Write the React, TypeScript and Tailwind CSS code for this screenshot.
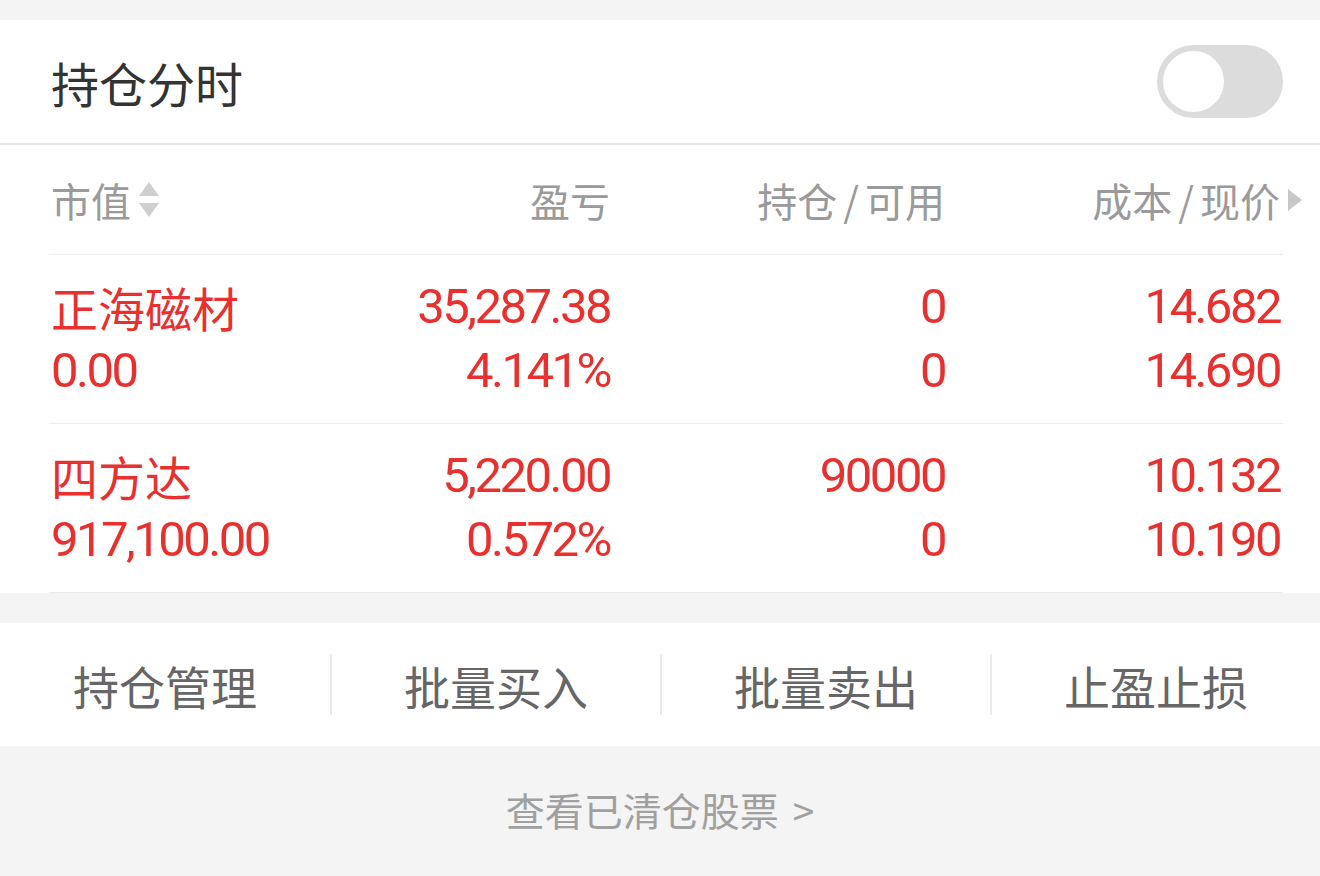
type Holding = {
  name: string;
  marketValue: string;
  profit: string;
  profitPct: string;
  position: string;
  available: string;
  cost: string;
  price: string;
};

const holdings: Holding[] = [
  {
    name: "正海磁材",
    marketValue: "0.00",
    profit: "35,287.38",
    profitPct: "4.141%",
    position: "0",
    available: "0",
    cost: "14.682",
    price: "14.690",
  },
  {
    name: "四方达",
    marketValue: "917,100.00",
    profit: "5,220.00",
    profitPct: "0.572%",
    position: "90000",
    available: "0",
    cost: "10.132",
    price: "10.190",
  },
];

const actions = ["持仓管理", "批量买入", "批量卖出", "止盈止损"];

const num = "font-['Roboto',sans-serif] text-[49px] tracking-[-2.5px]";

function SortIcon() {
  return (
    <svg width="24" height="42" viewBox="0 0 24 42" className="ml-[6px]">
      <polygon points="12,3 22,17 2,17" fill="#cfcfcf" />
      <polygon points="2,24 22,24 12,38" fill="#cfcfcf" />
    </svg>
  );
}

export default function App() {
  return (
    <div className="w-[1320px] h-[876px] bg-[#f4f4f4] pt-[20px] font-['Noto_Sans_CJK_SC',sans-serif] overflow-hidden">
      {/* title bar */}
      <div className="bg-white h-[125px] border-b-2 border-[#e8e8e8] flex items-center justify-between pl-[51px] pr-[37px]">
        <span className="text-[48px] leading-none text-[#333]">持仓分时</span>
        <div className="w-[126px] h-[73px] rounded-full bg-[#dcdcdc] p-[6px]">
          <div className="w-[61px] h-[61px] rounded-full bg-white" />
        </div>
      </div>

      {/* holdings table */}
      <div className="bg-white pl-[49px] pr-[37px]">
        <div className="h-[110px] border-b border-[#ececec] pl-[2px] pr-[3px] grid grid-cols-[279px_280px_335px_335px] items-center text-[40px] leading-none text-[#9a9a9a]">
          <div className="flex items-center">
            市值
            <SortIcon />
          </div>
          <div className="text-right">盈亏</div>
          <div className="text-right">
            持仓<span className="mx-[6px]">/</span>可用
          </div>
          <div className="flex justify-end">
            <span className="relative">
              成本<span className="mx-[6px]">/</span>现价
              <svg
                width="14"
                height="22"
                viewBox="0 0 14 22"
                className="absolute left-full ml-[8px] top-1/2 -translate-y-1/2"
              >
                <polygon points="0,0 14,11 0,22" fill="#c8c8c8" />
              </svg>
            </span>
          </div>
        </div>

        {holdings.map((h) => (
          <div
            key={h.name}
            className="h-[169px] border-b border-[#ececec] pl-[2px] pr-[3px] py-[20px] grid grid-cols-[279px_280px_335px_335px] leading-[64px] text-[#e8312f]"
          >
            <div>
              <div className="text-[47px]">{h.name}</div>
              <div className={num}>{h.marketValue}</div>
            </div>
            <div className={`text-right ${num}`}>
              <div>{h.profit}</div>
              <div>{h.profitPct}</div>
            </div>
            <div className={`text-right ${num}`}>
              <div>{h.position}</div>
              <div>{h.available}</div>
            </div>
            <div className={`text-right ${num}`}>
              <div>{h.cost}</div>
              <div>{h.price}</div>
            </div>
          </div>
        ))}
      </div>

      {/* action bar */}
      <div className="mt-[30px] bg-white h-[123px] grid grid-cols-4 items-center">
        {actions.map((a, i) => (
          <div
            key={a}
            className={`h-[61px] flex items-center justify-center text-[46px] leading-none text-[#666] ${
              i > 0 ? "border-l-2 border-[#ebebeb]" : ""
            }`}
          >
            {a}
          </div>
        ))}
      </div>

      <div className="pt-[44px] text-center text-[39px] leading-none text-[#a0a0a0]">
        查看已清仓股票<span className="ml-[14px]">&gt;</span>
      </div>
    </div>
  );
}
